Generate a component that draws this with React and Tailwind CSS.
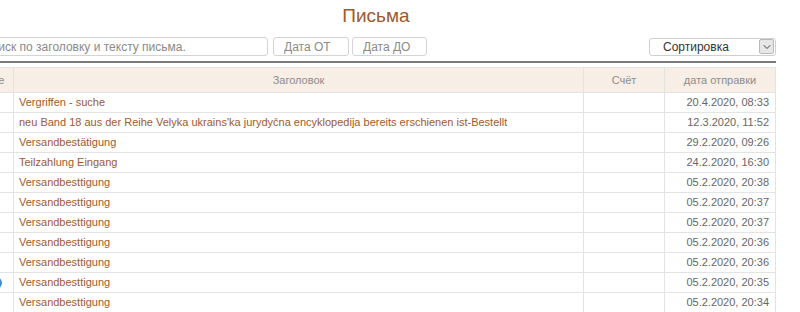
import { ChevronDown } from "lucide-react";

const rows = [
  { title: "Vergriffen - suche", date: "20.4.2020, 08:33" },
  {
    title:
      "neu Band 18 aus der Reihe Velyka ukrains'ka jurydyčna encyklopedija bereits erschienen ist-Bestellt",
    date: "12.3.2020, 11:52",
  },
  { title: "Versandbestätigung", date: "29.2.2020, 09:26" },
  { title: "Teilzahlung Eingang", date: "24.2.2020, 16:30" },
  { title: "Versandbesttigung", date: "05.2.2020, 20:38" },
  { title: "Versandbesttigung", date: "05.2.2020, 20:37" },
  { title: "Versandbesttigung", date: "05.2.2020, 20:37" },
  { title: "Versandbesttigung", date: "05.2.2020, 20:36" },
  { title: "Versandbesttigung", date: "05.2.2020, 20:36" },
  { title: "Versandbesttigung", date: "05.2.2020, 20:35", mark: true },
  { title: "Versandbesttigung", date: "05.2.2020, 20:34" },
];

export default function App() {
  return (
    <div
      className="w-[800px] h-[312px] overflow-hidden bg-white"
      style={{ fontFamily: '"Liberation Sans", Arial, sans-serif' }}
    >
      <div className="w-[800px] -ml-[24px]">
        {/* Title */}
        <h1 className="text-center text-[19px] leading-[22px] pt-[5px] text-[#a0582c]">
          Письма
        </h1>

        {/* Filters */}
        <div className="flex items-center mt-[10px] h-[19px]">
          <input
            className="w-[292px] h-[19px] px-[6px] text-[12px] border border-[#d4d4d4] rounded-[3px] placeholder:text-[#8a8a8a] outline-none"
            placeholder="Поиск по заголовку и тексту письма."
          />
          <input
            className="ml-[5px] w-[76px] h-[19px] px-[10px] text-[12px] border border-[#d4d4d4] rounded-[3px] placeholder:text-[#8a8a8a] outline-none"
            placeholder="Дата ОТ"
          />
          <input
            className="ml-[3px] w-[75px] h-[19px] px-[10px] text-[12px] border border-[#d4d4d4] rounded-[3px] placeholder:text-[#8a8a8a] outline-none"
            placeholder="Дата ДО"
          />
          <div className="ml-auto w-[127px] h-[18px] flex items-center border border-[#cfcfcf] rounded-[3px] pl-[13px] pr-[1px]">
            <span className="flex-1 text-[12px] text-[#333]">Сортировка</span>
            <span className="w-[15px] h-[15px] flex items-center justify-center bg-[#e6e6e6] border border-[#b8b8b8] rounded-[2px]">
              <ChevronDown size={12} strokeWidth={2} className="text-[#444]" />
            </span>
          </div>
        </div>

        {/* Separator */}
        <div className="mt-[5px] h-[2px] bg-[#7a7a7a]" />

        {/* Table */}
        <table className="mt-[4px] w-full border-collapse text-[11px] table-fixed">
          <colgroup>
            <col className="w-[37px]" />
            <col />
            <col className="w-[81px]" />
            <col className="w-[111px]" />
          </colgroup>
          <thead className="bg-[#f7eee5]">
            <tr className="h-[25px]">
              <th className="border border-[#e3e3e3] font-normal text-[#8c8c8c]">Все</th>
              <th className="border border-[#e3e3e3] font-normal text-[#8c8c8c]">Заголовок</th>
              <th className="border border-[#e3e3e3] font-normal text-[#8c8c8c]">Счёт</th>
              <th className="border border-[#e3e3e3] font-normal text-[#8c8c8c]">дата отправки</th>
            </tr>
          </thead>
          <tbody>
            {rows.map((row, index) => (
              <tr key={index} className="h-[20px]">
                <td className="border border-[#e3e3e3] text-center">
                  {row.mark && (
                    <span className="inline-block w-[12px] h-[12px] ml-[2px] rounded-full bg-[#3d8fd6] align-middle" />
                  )}
                </td>
                <td className="border border-[#e3e3e3] px-[5px] text-[#9c5a2e] whitespace-nowrap">
                  {row.title}
                </td>
                <td className="border border-[#e3e3e3]" />
                <td className="border border-[#e3e3e3] px-[6px] text-right text-[#666]">
                  {row.date}
                </td>
              </tr>
            ))}
          </tbody>
        </table>
      </div>
    </div>
  );
}
